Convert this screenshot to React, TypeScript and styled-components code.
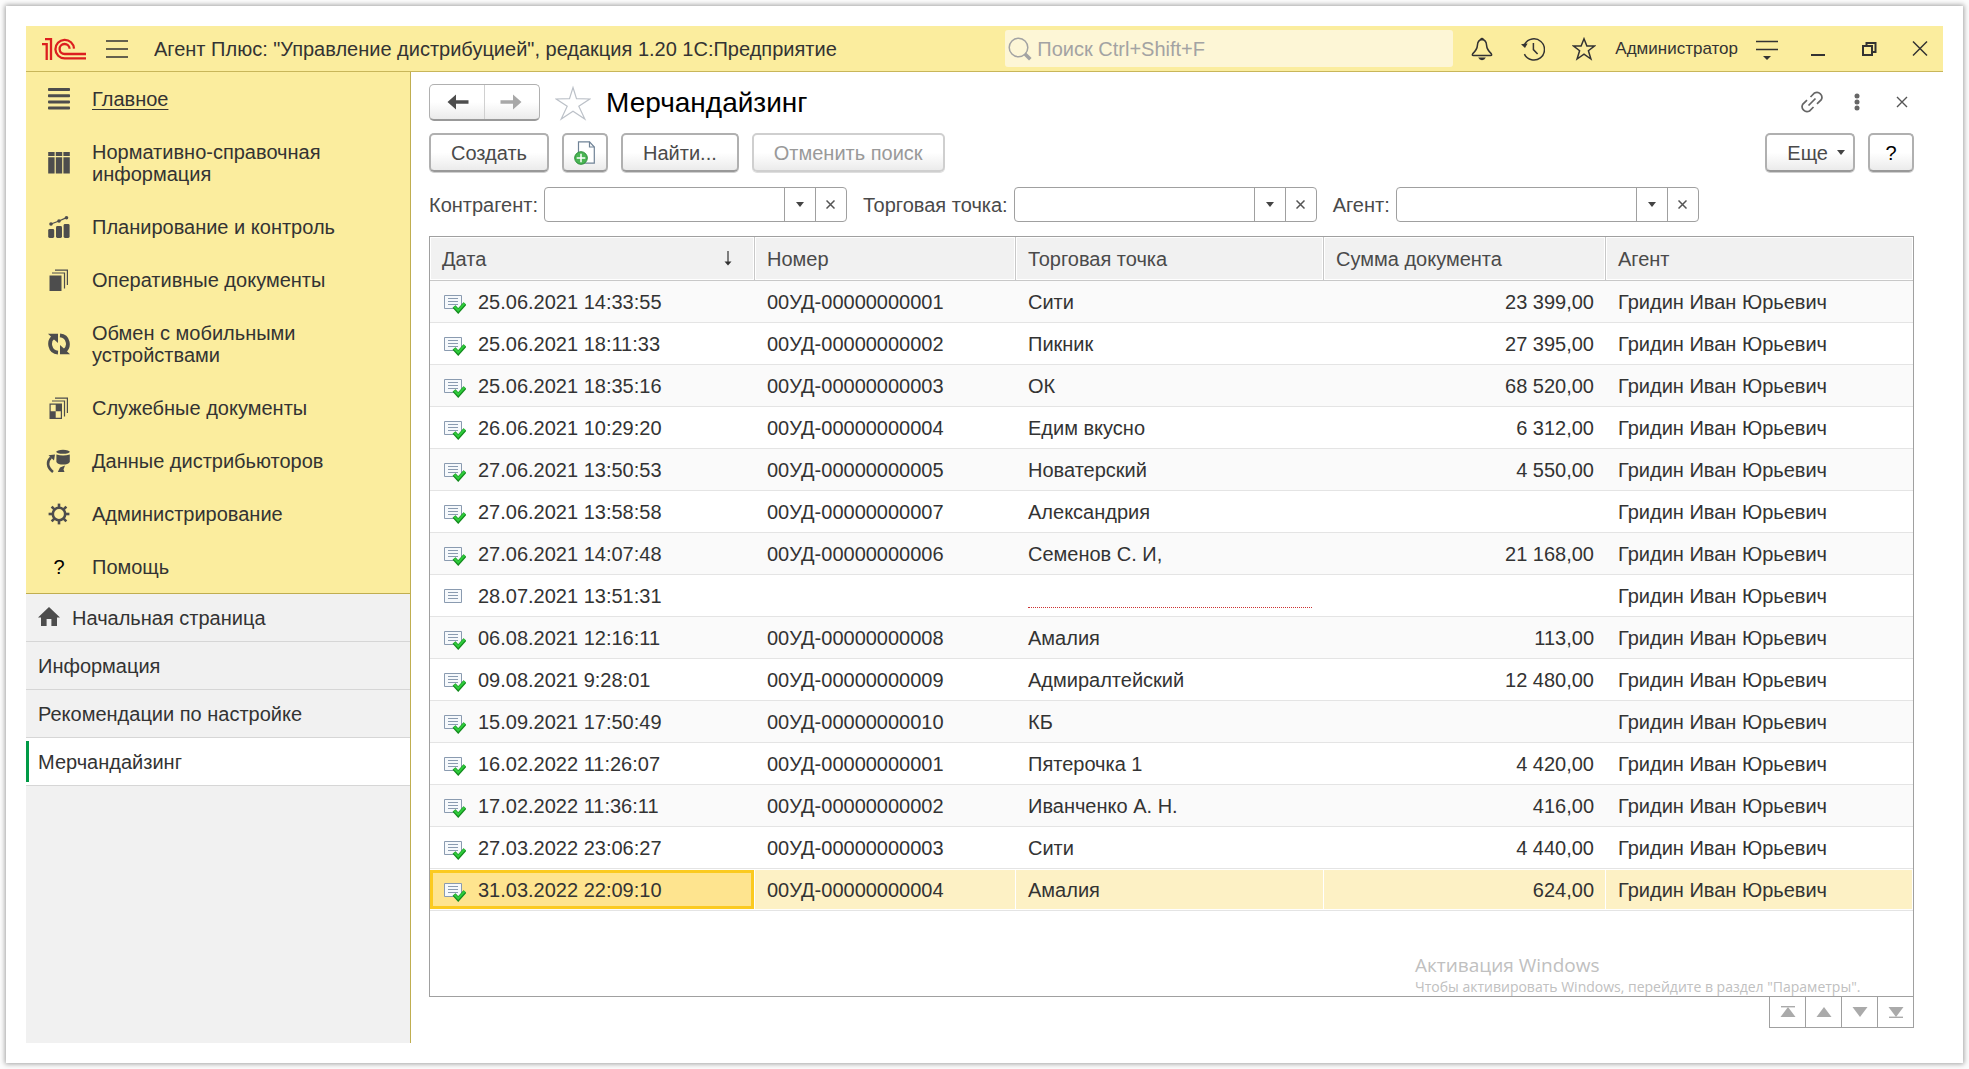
import React from "react";
import styled, { createGlobalStyle, css } from "styled-components";

const GlobalStyle = createGlobalStyle`
  *, *::before, *::after { box-sizing: border-box; }
  body {
    margin: 0;
    background: #fcfcfc;
    color: #333;
    font: 20px/22px "Liberation Sans", Arial, sans-serif;
  }
  button, input { font: inherit; color: inherit; }
  button { margin: 0; padding: 0; border: 0; background: none; cursor: pointer; }
  a { color: inherit; text-decoration: none; }
  svg { display: block; flex: none; }
`;

const Page = styled.div`
  display: flex;
  min-height: 100vh;
  padding: 6px;
`;

const Frame = styled.div`
  flex: 1;
  display: flex;
  flex-direction: column;
  min-width: 0;
  padding: 20px;
  background: #fff;
  box-shadow: 0 0 5px 1px rgba(0, 0, 0, 0.36);
`;

const TopBar = styled.header`
  display: flex;
  align-items: center;
  height: 46px;
  padding: 0 11px 0 16px;
  background: #fbed9e;
  border-bottom: 1px solid #c8b65a;
`;

const MenuButton = styled.button`
  margin: 0 26px 0 20px;
`;

const AppTitle = styled.div`
  flex: 1;
  min-width: 0;
  overflow: hidden;
  line-height: 24px;
  white-space: nowrap;
`;

const SearchBox = styled.label`
  flex: 0 1 448px;
  display: flex;
  align-items: center;
  gap: 5px;
  height: 37px;
  margin-right: 17px;
  padding-left: 3px;
  background: #fdf6d6;
  border-radius: 3px;
`;

const SearchInput = styled.input`
  flex: 1;
  min-width: 0;
  padding: 0;
  border: 0;
  outline: 0;
  background: transparent;
  &::placeholder { color: #a3a3a3; opacity: 1; }
`;

const TopActions = styled.div`
  display: flex;
  align-items: center;
  gap: 27px;
`;

const UserButton = styled.button`
  margin: 0 -10px 0 -8px;
  font-size: 17px;
  line-height: 20px;
`;

const Body = styled.div`
  flex: 1;
  display: flex;
`;

const Sidebar = styled.aside`
  flex: none;
  width: 385px;
  background: #f1f1f1;
  border-right: 1px solid #c0ae50;
`;

const Sections = styled.nav`
  background: #fbed9e;
  border-bottom: 1px solid #c0ae50;
`;

const SectionLink = styled.a<{ $active?: boolean }>`
  display: flex;
  align-items: center;
  gap: 22px;
  padding: 16px 10px 15px 22px;
  ${(p) =>
    p.$active &&
    css`
      text-decoration: underline;
      text-decoration-thickness: 1px;
      text-underline-offset: 3px;
    `}
`;

const HelpMark = styled.span`
  width: 22px;
  color: #000;
  text-align: center;
`;

const OpenPages = styled.nav`
  display: flex;
  flex-direction: column;
`;

const PageLink = styled.a<{ $active?: boolean }>`
  display: flex;
  align-items: center;
  gap: 12px;
  height: 48px;
  padding-left: 12px;
  border-bottom: 1px solid #d6d6d6;
  background: ${(p) =>
    p.$active
      ? "linear-gradient(#009a46, #009a46) 0 3px / 3px 41px no-repeat #fff"
      : "transparent"};
`;

const Main = styled.main`
  flex: 1;
  min-width: 0;
  display: flex;
  flex-direction: column;
  padding: 12px 29px 15px 18px;
`;

const Heading = styled.div`
  display: flex;
  align-items: center;
  height: 37px;
  margin-bottom: 12px;
`;

const raised = css`
  background: linear-gradient(#fff 50%, #ebebeb);
  border: 1px solid #b0b0b0;
  border-bottom-color: #999;
`;

const History = styled.div`
  ${raised}
  display: flex;
  height: 37px;
  width: 111px;
  margin-right: 15px;
  border-bottom-width: 2px;
  border-radius: 5px;
`;

const HistoryButton = styled.button`
  flex: 1;
  display: flex;
  align-items: center;
  justify-content: center;
  padding-left: 2px;
  & + & { border-left: 1px solid #d0d0d0; padding: 0 2px 0 0; }
`;

const Title = styled.h1`
  flex: 1;
  margin: 0 0 0 15px;
  color: #000;
  font-size: 28px;
  font-weight: 400;
  line-height: 34px;
`;

const FormActions = styled.div`
  display: flex;
  align-items: center;
  gap: 21px;
  padding-bottom: 2px;
`;

const Toolbar = styled.div`
  display: flex;
  gap: 13px;
  margin-bottom: 15px;
`;

const Button = styled.button<{ $square?: boolean }>`
  ${raised}
  display: flex;
  align-items: center;
  justify-content: center;
  gap: 9px;
  height: 39px;
  padding: ${(p) => (p.$square ? "0" : "0 20px")};
  width: ${(p) => (p.$square ? "46px" : "auto")};
  border-width: 2px;
  border-radius: 5px;
  box-shadow: 0 1px 0 #cfcfcf;
  color: #4a4a4a;
  &:disabled {
    color: #999;
    border-color: #cfcfcf;
    box-shadow: 0 1px 0 #dedede;
    cursor: default;
  }
`;

const MoreButton = styled(Button)`
  padding: 0 8px 0 20px;
`;

const HelpButton = styled(Button)`
  color: #000;
`;

const Spacer = styled.div`
  flex: 1;
`;

const Filters = styled.form`
  display: flex;
  gap: 16px;
  margin-bottom: 14px;
  color: #4a4a4a;
`;

const Filter = styled.div`
  display: flex;
  align-items: center;
  gap: 6px;
`;

const Field = styled.div`
  display: flex;
  width: 303px;
  height: 35px;
  border: 1px solid #a0a0a0;
  border-radius: 4px;
  background: #fff;
`;

const FieldInput = styled.input`
  flex: 1;
  min-width: 0;
  padding: 0 6px;
  border: 0;
  outline: 0;
  background: transparent;
`;

const FieldButton = styled.button`
  display: flex;
  align-items: center;
  justify-content: center;
  width: 31px;
  border-left: 1px solid #a0a0a0;
`;

const ListPanel = styled.section`
  position: relative;
  flex: 1;
  border: 1px solid #a0a0a0;
`;

const Table = styled.table`
  width: 100%;
  table-layout: fixed;
  border-collapse: separate;
  border-spacing: 0;
`;

const Col = styled.col<{ $width?: number }>`
  width: ${(p) => (p.$width ? `${p.$width}px` : "auto")};
`;

const HeadCell = styled.th`
  height: 44px;
  padding: 0 12px;
  background: #f1f1f1;
  border-bottom: 1px solid #c8c8c8;
  border-right: 1px solid #c8c8c8;
  box-shadow: inset 0 0 0 1px #fff;
  color: #4a4a4a;
  font-weight: 400;
  text-align: left;
  &:last-child { border-right: 0; }
`;

const SortHead = styled.div`
  display: flex;
  align-items: center;
  justify-content: space-between;
  padding-right: 10px;
`;

const Cell = styled.td<{ $right?: boolean }>`
  height: 42px;
  padding: 0 12px;
  border-bottom: 1px solid #e4e4e4;
  text-align: ${(p) => (p.$right ? "right" : "left")};
  white-space: nowrap;
`;

const Row = styled.tr<{ $selected?: boolean }>`
  &:nth-child(odd) { background: #fafafa; }
  ${(p) =>
    p.$selected &&
    css`
      && { background: #fff; }
      ${Cell} {
        background: #fdf1c5;
        box-shadow: inset 0 1px 0 #fff, inset 0 -1px 0 #fff, inset -1px 0 0 #fff;
      }
      ${Cell}:first-child {
        background: #fee48f;
        box-shadow: inset 0 1px 0 #fff, inset 0 -1px 0 #fff, inset -1px 0 0 #fff,
          inset 3px 0 0 #fbca20, inset -4px 0 0 #fbca20,
          inset 0 4px 0 #fbca20, inset 0 -4px 0 #fbca20;
      }
    `}
`;

const DateValue = styled.div`
  display: flex;
  align-items: center;
  gap: 12px;
  padding-left: 2px;
`;

const MissingValue = styled.div`
  height: 24px;
  border-bottom: 1px dotted #c33;
`;

const Watermark = styled.div`
  position: absolute;
  right: 44px;
  bottom: -1px;
  min-width: 454px;
  color: #c0c0c0;
  font-family: "Open Sans", "Noto Sans", sans-serif;
  font-size: 14px;
  line-height: 20px;
  pointer-events: none;
`;

const WatermarkTitle = styled.div`
  font-size: 19px;
  line-height: 24px;
`;

const Pager = styled.div`
  display: flex;
  align-self: flex-end;
  border-right: 1px solid #a0a0a0;
`;

const PagerButton = styled.button`
  display: flex;
  align-items: center;
  justify-content: center;
  width: 36px;
  height: 31px;
  border-left: 1px solid #a0a0a0;
  border-bottom: 1px solid #a0a0a0;
`;

const ink = "#4d4d4d";
const dark = "#333";

const Logo = () => (
  <svg width="44" height="22" viewBox="0 0 44 22" fill="none" stroke="#dc1f1f" strokeWidth="2.3">
    <path d="M0 6.2H4.700V22M3 1.200H9V22" />
    <path d="M32 10.600A9.300 9.300 0 1 0 22.700 20.400H44" />
    <path d="M27.600 10.800A5 5 0 1 0 22.700 16H44" />
  </svg>
);

const Burger = () => (
  <svg width="22" height="18" viewBox="0 0 22 18" stroke={dark} strokeWidth="1.400">
    <path d="M0 1H22M0 9H22M0 17H22" />
  </svg>
);

const Magnifier = () => (
  <svg width="24" height="24" viewBox="0 0 24 24" fill="none" stroke="#a3a3a3">
    <circle cx="10.500" cy="10.500" r="9.300" strokeWidth="1.500" />
    <path d="M17 17L22.300 22.300" strokeWidth="3.600" />
  </svg>
);

const Bell = () => (
  <svg width="24" height="24" viewBox="0 0 24 24" fill="none" stroke={dark} strokeWidth="1.500">
    <path d="M12 2.600C8.600 2.800 7.600 5.300 7.400 8.400C7.200 12.200 5.400 14.200 2.800 16.600Q1.600 18.600 3.400 18.600H20.600Q22.400 18.600 21.200 16.600C18.600 14.200 16.800 12.200 16.600 8.400C16.400 5.300 15.400 2.800 12 2.600Z" />
    <path d="M10.800 2.200A1.300 1.300 0 0 1 13.200 2.200Z" fill={dark} />
    <path d="M8.200 20.600H15.800Q14.600 23.200 12 23.200T8.200 20.600Z" fill={dark} stroke="none" />
  </svg>
);

const Clock = () => (
  <svg width="24" height="24" viewBox="0 0 24 24" fill="none" stroke={dark} strokeWidth="1.500">
    <path d="M3.700 7.200A10.600 10.600 0 1 1 3.400 17.200" />
    <path d="M12.400 6V12.600L16.600 17" />
    <path d="M0 7.200L6.600 6.400L4 11Z" fill={dark} stroke="none" />
  </svg>
);

const Star = () => (
  <svg width="24" height="24" viewBox="0 0 24 24" fill="none" stroke={dark} strokeWidth="1.500">
    <path d="M12 1.800L14.900 9H22.400L16.400 13.700L18.900 22L12 17.200L5.100 22L7.600 13.700L1.600 9H9.100Z" />
  </svg>
);

const BigStar = () => (
  <svg width="36" height="36" viewBox="0 0 36 36" fill="#fff" stroke="#bcc1c8" strokeWidth="1.200">
    <path d="M18 2.500L21.500 13.600L34.800 14L23.800 21.300L29.800 34L18 26.300L6.200 34L12.200 21.300L1.200 14L14.500 13.600Z" />
  </svg>
);

const ViewMenu = () => (
  <svg width="24" height="24" viewBox="0 0 24 24" stroke={dark} strokeWidth="1.500">
    <path d="M1 4.500H23M1 12.500H23" />
    <path d="M8 19H16L12 23Z" fill={dark} stroke="none" />
  </svg>
);

const Minimize = () => (
  <svg width="24" height="24" viewBox="0 0 24 24">
    <path d="M5 17H19V19H5Z" fill={dark} />
  </svg>
);

const Restore = () => (
  <svg width="24" height="24" viewBox="0 0 24 24" fill="none" stroke={dark} strokeWidth="2">
    <path d="M6 9H15V18H6ZM9.500 9V6H18.500V15H15" />
  </svg>
);

const Close = () => (
  <svg width="24" height="24" viewBox="0 0 24 24" stroke={dark} strokeWidth="1.500">
    <path d="M5 4.500L19 18.500M19 4.500L5 18.500" />
  </svg>
);

const LinesIcon = () => (
  <svg width="22" height="22" viewBox="0 0 22 22" fill={ink}>
    {[0, 6.2, 12.4, 18.6].map((y) => (
      <rect key={y} y={y} width="22" height="3" rx="0.800" />
    ))}
  </svg>
);

const ColumnsIcon = () => (
  <svg width="22" height="22" viewBox="0 0 22 22" fill={ink}>
    {[0.2, 7.8, 15.4].map((x) => (
      <path key={x} d={`M${x} 0H${x + 6.4}V4H${x}ZM${x} 5.200H${x + 6.4}V21.400H${x}Z`} />
    ))}
  </svg>
);

const ChartIcon = () => (
  <svg width="22" height="22" viewBox="0 0 22 22" fill={ink}>
    <rect x="0.200" y="13" width="6" height="9" rx="1.400" />
    <rect x="8" y="10" width="6" height="12" rx="1.400" />
    <rect x="15.600" y="8" width="6" height="14" rx="1.400" />
    <path d="M3 8L11 5L18.500 1.600" stroke={ink} strokeWidth="1.200" fill="none" />
    <circle cx="3" cy="8" r="1.800" />
    <circle cx="11" cy="5" r="1.800" />
    <circle cx="18.500" cy="1.800" r="1.800" />
  </svg>
);

const DocsIcon = () => (
  <svg width="22" height="22" viewBox="0 0 22 22" fill="none" stroke={ink} strokeWidth="1.200">
    <path d="M1.500 6.500H13.500V22H1.500Z" fill={ink} stroke="none" />
    <path d="M4 4H16.500V19.500M7 1.200H19.400V16" />
  </svg>
);

const ServiceDocsIcon = () => (
  <svg width="22" height="22" viewBox="0 0 22 22" fill="none" stroke={ink} strokeWidth="1.200">
    <path d="M2.100 7.100H13.400V21.400H2.100Z" />
    <path d="M7.700 7H13.500V14.200H7.700ZM2 14.200H7.700V21.500H2Z" fill={ink} stroke="none" />
    <path d="M4 4H16.500V19.500M7 1.200H19.400V16" />
  </svg>
);

const ExchangeIcon = () => (
  <svg width="22" height="22" viewBox="0 0 22 22" fill="none" stroke={ink} strokeWidth="3.800">
    <path d="M10 19.600C1.500 19 -0.500 8 6 3.600" />
    <path d="M12 2.400C20.500 3 22.500 14 16 18.400" />
    <path d="M0 0.800H10V10L6.600 7Z" fill={ink} stroke="none" />
    <path d="M22 21.200H12V12L15.400 15Z" fill={ink} stroke="none" />
  </svg>
);

const DistributorIcon = () => (
  <svg width="22" height="22" viewBox="0 0 22 22" fill={ink} overflow="visible">
    <ellipse cx="15" cy="1.800" rx="6.800" ry="2" />
    <path d="M8.400 4.400Q15 6.600 21.800 4.400V12Q20 14.600 15 14.600T8.400 12Z" />
    <path d="M5 22C-1.500 17 -1 11 3 7.600" fill="none" stroke={ink} strokeWidth="2.600" />
    <path d="M0.500 5.200L7 4.600L6 10.500Z" />
    <path d="M9.800 22L12 17.500L17 15.600L15.500 19.500L16.500 22Z" />
  </svg>
);

const GearIcon = () => (
  <svg width="22" height="22" viewBox="0 0 22 22" fill="none" stroke={ink}>
    <circle cx="11" cy="11" r="6.200" strokeWidth="2.600" />
    {[0, 45, 90, 135, 180, 225, 270, 315].map((a) => (
      <path key={a} d="M11 4.800V0.600" strokeWidth="2.600" transform={`rotate(${a} 11 11)`} />
    ))}
  </svg>
);

const HomeIcon = () => (
  <svg width="22" height="22" viewBox="0 0 22 22" fill={ink}>
    <path d="M11 0L22 10.500H19V19H13.400V12H8.600V19H3V10.500H0Z" />
  </svg>
);

const Arrow = ({ back }: { back?: boolean }) => (
  <svg width="22" height="16" viewBox="0 0 22 16" fill={back ? ink : "#a8a8a8"}>
    <path d={back ? "M0.500 8L9 0.500V6.200H21.500V9.800H9V15.500Z" : "M21.500 8L13 0.500V6.200H0.500V9.800H13V15.500Z"} />
  </svg>
);

const LinkIcon = () => (
  <svg width="24" height="24" viewBox="0 0 24 24" fill="none" stroke="#666" strokeWidth="1.700">
    <path d="M8.500 15.500L15.500 8.500" />
    <path d="M10.500 7L14.500 3A5 5 0 0 1 21.300 9.700L17 13.800" />
    <path d="M13.500 17L9.500 21A5 5 0 0 1 2.700 14.300L7 10.200" />
  </svg>
);

const Dots = () => (
  <svg width="24" height="24" viewBox="0 0 24 24" fill="#666">
    <circle cx="12" cy="6" r="2.500" />
    <circle cx="12" cy="12" r="2.500" />
    <circle cx="12" cy="18" r="2.500" />
  </svg>
);

const SmallClose = () => (
  <svg width="24" height="24" viewBox="0 0 24 24" stroke="#555" strokeWidth="1.400">
    <path d="M7 7L17 17M17 7L7 17" />
  </svg>
);

const NewCopyIcon = () => (
  <svg width="22" height="24" viewBox="0 0 22 24">
    <path d="M4.500 0.800H15.500L20.300 6V22.200H4.500Z" fill="#fff" stroke="#6f8296" strokeWidth="1.200" />
    <path d="M15.500 0.800V6H20.300" fill="none" stroke="#6f8296" strokeWidth="1.200" />
    <circle cx="7" cy="17" r="6.300" fill="#4ab554" stroke="#2b8f38" />
    <path d="M7 12.700V21.300M2.700 17H11.300" stroke="#fff" strokeWidth="1.500" />
  </svg>
);

const Caret = () => (
  <svg width="8" height="5" viewBox="0 0 8 5" fill="#444">
    <path d="M0 0H8L4 5Z" />
  </svg>
);

const Cross = () => (
  <svg width="9" height="9" viewBox="0 0 9 9" stroke="#555" strokeWidth="1.500">
    <path d="M0.500 0.500L8.500 8.500M8.500 0.500L0.500 8.500" />
  </svg>
);

const SortArrow = () => (
  <svg width="8" height="15" viewBox="0 0 8 15" fill={dark}>
    <path d="M3.400 0H4.600V10.500H7.500L4 14.500L0.500 10.500H3.400Z" />
  </svg>
);

const DocIcon = ({ posted }: { posted: boolean }) => (
  <svg width="22" height="24" viewBox="0 -4 22 24" fill="none">
    <path d="M0.500 1.500H17.500V14.500H0.500Z" fill="#f6f9fc" stroke="#8a9bb0" />
    <path d="M4 4.500H14M4 7.500H14M4 10.500H14" stroke="#8a9bb0" />
    {posted && (
      <>
        <path d="M10 12.500L14.200 17L21 9.500" stroke="#128a1c" strokeWidth="4" />
        <path d="M10.300 12.400L14.200 16.400L20.700 9.300" stroke="#2fcb3c" strokeWidth="2.200" />
      </>
    )}
  </svg>
);

const PagerIcon = ({ down, bar }: { down?: boolean; bar?: boolean }) => (
  <svg width="16" height="12" viewBox="0 0 16 12" fill="#aaa">
    <g transform={down ? "rotate(180 8 6)" : undefined}>
      <path d="M8 1L15.500 11H0.500Z" />
      {bar && <path d="M1 0H15V1.400H1Z" />}
    </g>
  </svg>
);

const sections = [
  { label: "Главное", icon: <LinesIcon />, active: true },
  { label: "Нормативно-справочная информация", icon: <ColumnsIcon /> },
  { label: "Планирование и контроль", icon: <ChartIcon /> },
  { label: "Оперативные документы", icon: <DocsIcon /> },
  { label: "Обмен с мобильными устройствами", icon: <ExchangeIcon /> },
  { label: "Служебные документы", icon: <ServiceDocsIcon /> },
  { label: "Данные дистрибьюторов", icon: <DistributorIcon /> },
  { label: "Администрирование", icon: <GearIcon /> },
  { label: "Помощь", icon: <HelpMark>?</HelpMark> },
];

const agent = "Гридин Иван Юрьевич";

const rows = [
  ["25.06.2021 14:33:55", "00УД-00000000001", "Сити", "23 399,00"],
  ["25.06.2021 18:11:33", "00УД-00000000002", "Пикник", "27 395,00"],
  ["25.06.2021 18:35:16", "00УД-00000000003", "ОК", "68 520,00"],
  ["26.06.2021 10:29:20", "00УД-00000000004", "Едим вкусно", "6 312,00"],
  ["27.06.2021 13:50:53", "00УД-00000000005", "Новатерский", "4 550,00"],
  ["27.06.2021 13:58:58", "00УД-00000000007", "Александрия", ""],
  ["27.06.2021 14:07:48", "00УД-00000000006", "Семенов С. И,", "21 168,00"],
  ["28.07.2021 13:51:31", "", "", ""],
  ["06.08.2021 12:16:11", "00УД-00000000008", "Амалия", "113,00"],
  ["09.08.2021 9:28:01", "00УД-00000000009", "Адмиралтейский", "12 480,00"],
  ["15.09.2021 17:50:49", "00УД-00000000010", "КБ", ""],
  ["16.02.2022 11:26:07", "00УД-00000000001", "Пятерочка 1", "4 420,00"],
  ["17.02.2022 11:36:11", "00УД-00000000002", "Иванченко А. Н.", "416,00"],
  ["27.03.2022 23:06:27", "00УД-00000000003", "Сити", "4 440,00"],
  ["31.03.2022 22:09:10", "00УД-00000000004", "Амалия", "624,00"],
];

const filters = [
  { id: "contractor", label: "Контрагент:" },
  { id: "outlet", label: "Торговая точка:" },
  { id: "agent", label: "Агент:" },
];

export default function App() {
  return (
    <Page>
      <GlobalStyle />
      <Frame>
        <TopBar>
          <Logo />
          <MenuButton aria-label="Меню"><Burger /></MenuButton>
          <AppTitle>Агент Плюс: "Управление дистрибуцией", редакция 1.20 1С:Предприятие</AppTitle>
          <SearchBox>
            <Magnifier />
            <SearchInput type="text" aria-label="Поиск" placeholder="Поиск Ctrl+Shift+F" />
          </SearchBox>
          <TopActions>
            <button aria-label="Уведомления"><Bell /></button>
            <button aria-label="История"><Clock /></button>
            <button aria-label="Избранное"><Star /></button>
            <UserButton>Администратор</UserButton>
            <button aria-label="Настройки вида"><ViewMenu /></button>
            <button aria-label="Свернуть"><Minimize /></button>
            <button aria-label="Восстановить"><Restore /></button>
            <button aria-label="Закрыть"><Close /></button>
          </TopActions>
        </TopBar>
        <Body>
          <Sidebar>
            <Sections>
              {sections.map((s) => (
                <SectionLink key={s.label} href="#" $active={s.active}>
                  {s.icon}
                  <span>{s.label}</span>
                </SectionLink>
              ))}
            </Sections>
            <OpenPages>
              <PageLink href="#"><HomeIcon />Начальная страница</PageLink>
              <PageLink href="#">Информация</PageLink>
              <PageLink href="#">Рекомендации по настройке</PageLink>
              <PageLink href="#" $active>Мерчандайзинг</PageLink>
            </OpenPages>
          </Sidebar>
          <Main>
            <Heading>
              <History>
                <HistoryButton aria-label="Назад"><Arrow back /></HistoryButton>
                <HistoryButton aria-label="Вперед"><Arrow /></HistoryButton>
              </History>
              <button aria-label="В избранное"><BigStar /></button>
              <Title>Мерчандайзинг</Title>
              <FormActions>
                <button aria-label="Получить ссылку"><LinkIcon /></button>
                <button aria-label="Действия"><Dots /></button>
                <button aria-label="Закрыть форму"><SmallClose /></button>
              </FormActions>
            </Heading>
            <Toolbar>
              <Button>Создать</Button>
              <Button $square aria-label="Создать копированием"><NewCopyIcon /></Button>
              <Button>Найти...</Button>
              <Button disabled>Отменить поиск</Button>
              <Spacer />
              <MoreButton>Еще<Caret /></MoreButton>
              <HelpButton $square>?</HelpButton>
            </Toolbar>
            <Filters>
              {filters.map((f) => (
                <Filter key={f.id}>
                  <label htmlFor={f.id}>{f.label}</label>
                  <Field>
                    <FieldInput id={f.id} type="text" />
                    <FieldButton type="button" aria-label="Выбрать"><Caret /></FieldButton>
                    <FieldButton type="button" aria-label="Очистить"><Cross /></FieldButton>
                  </Field>
                </Filter>
              ))}
            </Filters>
            <ListPanel>
              <Table>
                <colgroup>
                  <Col $width={325} />
                  <Col $width={261} />
                  <Col $width={308} />
                  <Col $width={282} />
                  <Col />
                </colgroup>
                <thead>
                  <tr>
                    <HeadCell><SortHead>Дата<SortArrow /></SortHead></HeadCell>
                    <HeadCell>Номер</HeadCell>
                    <HeadCell>Торговая точка</HeadCell>
                    <HeadCell>Сумма документа</HeadCell>
                    <HeadCell>Агент</HeadCell>
                  </tr>
                </thead>
                <tbody>
                  {rows.map(([date, number, outlet, sum], i) => (
                    <Row key={date} $selected={i === rows.length - 1}>
                      <Cell>
                        <DateValue><DocIcon posted={number !== ""} />{date}</DateValue>
                      </Cell>
                      <Cell>{number}</Cell>
                      <Cell>{outlet || <MissingValue />}</Cell>
                      <Cell $right>{sum}</Cell>
                      <Cell>{agent}</Cell>
                    </Row>
                  ))}
                </tbody>
              </Table>
              <Watermark>
                <WatermarkTitle>Активация Windows</WatermarkTitle>
                Чтобы активировать Windows, перейдите в раздел "Параметры".
              </Watermark>
            </ListPanel>
            <Pager>
              <PagerButton aria-label="В начало"><PagerIcon bar /></PagerButton>
              <PagerButton aria-label="Выше"><PagerIcon /></PagerButton>
              <PagerButton aria-label="Ниже"><PagerIcon down /></PagerButton>
              <PagerButton aria-label="В конец"><PagerIcon down bar /></PagerButton>
            </Pager>
          </Main>
        </Body>
      </Frame>
    </Page>
  );
}
